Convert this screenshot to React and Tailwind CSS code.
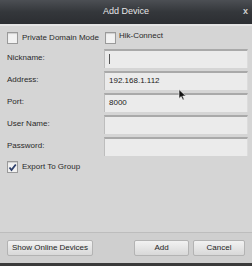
import React from 'react';

function Check({ checked }) {
  return (
    <span className="w-[11px] h-[12px] bg-[#f2f2f2] border border-[#9a9a9a] shadow-[inset_0_1px_1px_rgba(0,0,0,0.15)] flex items-center justify-center">
      {checked && (
        <svg width="9" height="9" viewBox="0 0 9 9">
          <path d="M1.5 4.5 L3.5 7 L7.8 1.5" fill="none" stroke="#2d3f6b" strokeWidth="1.8" />
        </svg>
      )}
    </span>
  );
}

function Field({ label, value, caret }) {
  return (
    <div className="flex items-center h-[22px]">
      <span className="w-[104px] pl-[7px] text-[8px] text-[#2a2a2a]">{label}</span>
      <div className="flex-1 mr-[4px] h-[19px] bg-[#ebebeb] border-t-2 border-t-[#a9a9a9] border-l border-l-[#bdbdbd] border-r border-r-[#dcdcdc] flex items-center pl-[4px] text-[8px] text-[#222]">
        {caret && <span className="w-px h-[10px] bg-[#555]" />}
        {value}
      </div>
    </div>
  );
}

export default function App() {
  return (
    <div className="w-[252px] h-[266px] bg-[#d5d5d5] flex flex-col relative overflow-hidden" style={{ fontFamily: '"Liberation Sans", Arial, sans-serif' }}>
      <div className="h-[24px] bg-gradient-to-b from-[#4c4f54] via-[#34373b] to-[#2c2e32] flex items-center justify-center relative shrink-0">
        <span className="text-[9px] text-[#e6e6e6]">Add Device</span>
        <span className="absolute right-[4px] top-[7px] text-[9px] font-bold text-[#cfcfcf] leading-none">x</span>
      </div>
      <div className="h-[2px] bg-[#e4e4e4]" />
      <div className="flex items-center h-[18px] mt-[3px] pl-[7px] text-[8px] text-[#2a2a2a]">
        <Check />
        <span className="ml-[4px]">Private Domain Mode</span>
        <span className="ml-[6px]"><Check /></span>
        <span className="ml-[3px] -mt-[4px]">Hik-Connect</span>
      </div>
      <div className="flex flex-col">
        <Field label="Nickname:" caret />
        <Field label="Address:" value="192.168.1.112" />
        <Field label="Port:" value="8000" />
        <Field label="User Name:" />
        <Field label="Password:" />
      </div>
      <div className="flex items-center h-[20px] pl-[7px] text-[8px] text-[#2a2a2a]">
        <Check checked />
        <span className="ml-[4px]">Export To Group</span>
      </div>
      <div className="flex-1" />
      <div className="border-t border-[#bdbdbd] bg-[#cfcfcf] h-[31px] flex items-center px-[7px] gap-[4px] text-[8px] text-[#1e1e1e] shrink-0">
        <button className="h-[16px] w-[86px] bg-gradient-to-b from-[#f2f2f2] to-[#d8d8d8] border border-[#b3b3b3] rounded-[2px]">Show Online Devices</button>
        <div className="flex-1" />
        <button className="h-[16px] w-[55px] bg-gradient-to-b from-[#f2f2f2] to-[#d8d8d8] border border-[#b3b3b3] rounded-[2px]">Add</button>
        <button className="h-[16px] w-[52px] bg-gradient-to-b from-[#f2f2f2] to-[#d8d8d8] border border-[#b3b3b3] rounded-[2px]">Cancel</button>
      </div>
      <div className="h-[3px] bg-[#3a3a3a] shrink-0" />
      <svg className="absolute left-[178px] top-[89px]" width="9" height="12" viewBox="0 0 9 12">
        <path d="M1 0.5 L1 9.5 L3.2 7.5 L4.8 11 L6.2 10.4 L4.7 7 L7.8 7 Z" fill="#111" stroke="#f5f5f5" strokeWidth="0.6" />
      </svg>
    </div>
  );
}
